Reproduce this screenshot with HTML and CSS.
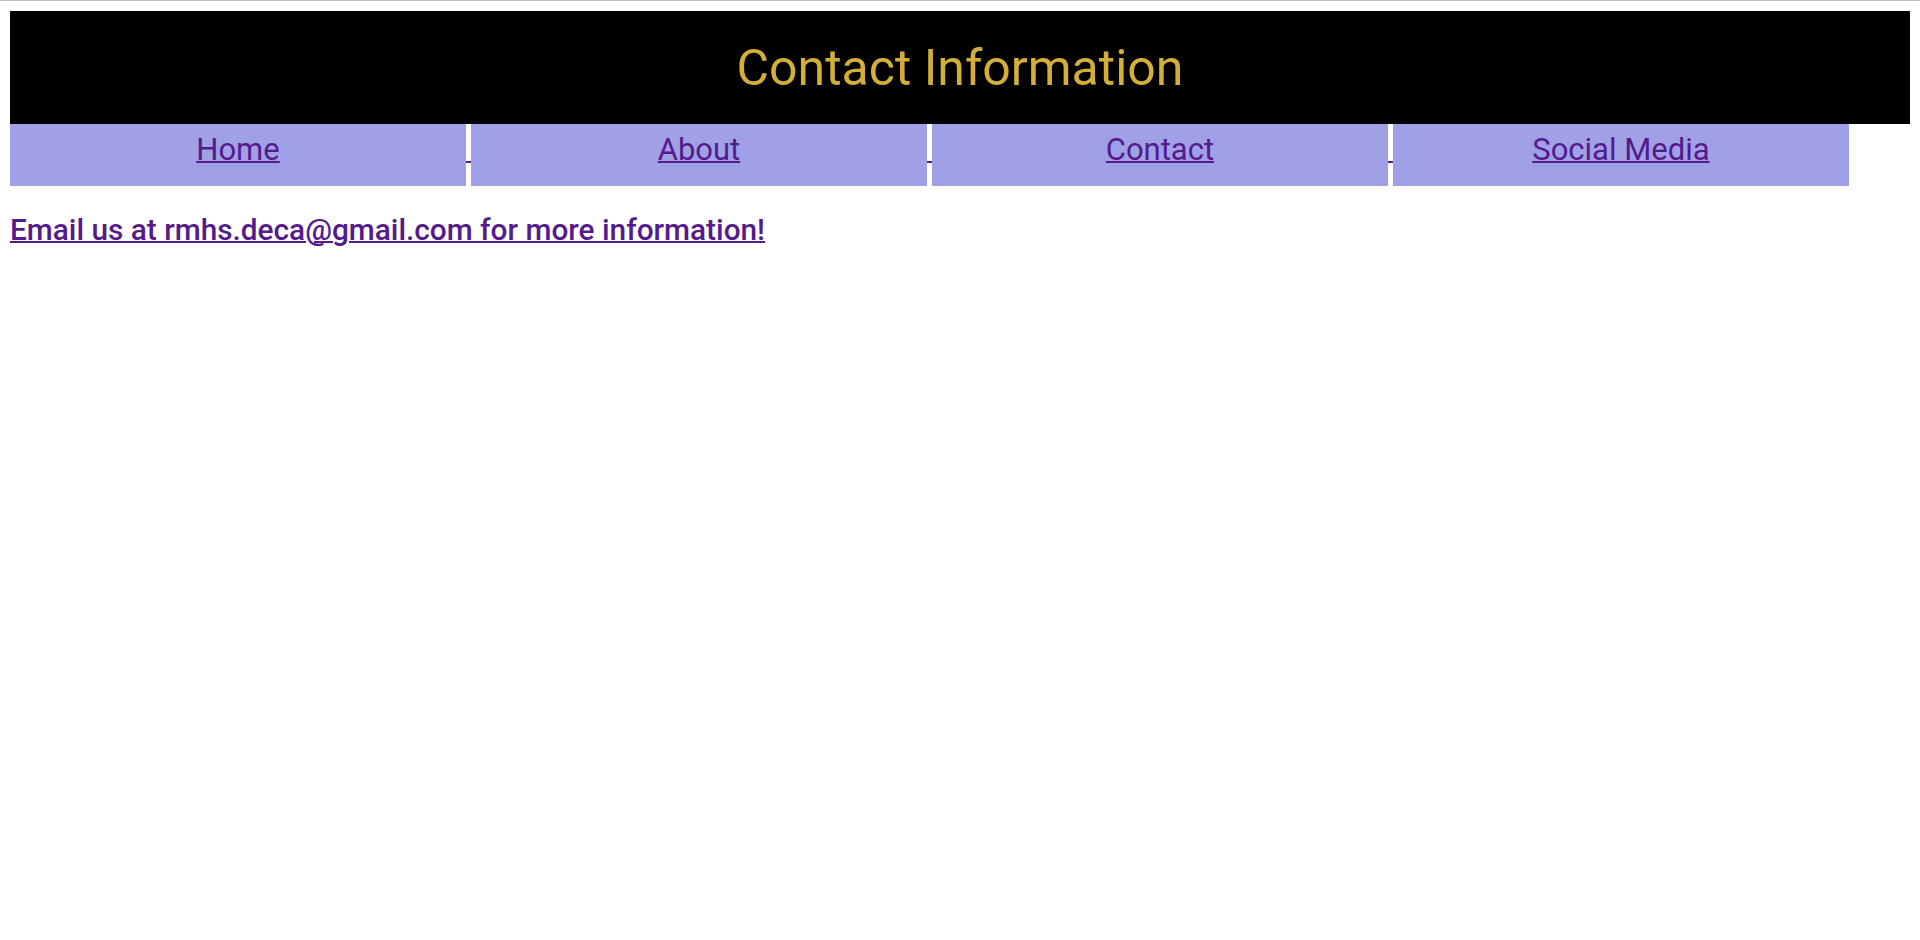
FILE: index.html
```html
<!DOCTYPE html>
<html lang="en">
<head>
<meta charset="utf-8">
<title>Contact Information</title>
<link rel="stylesheet" href="styles.css">
</head>
<body>
<header class="banner">
  <h1 class="banner-title">Contact Information</h1>
</header>
<nav class="menu">
  <a class="menu-link" href="#">Home</a>
  <a class="menu-link" href="#">About</a>
  <a class="menu-link" href="#">Contact</a>
  <a class="menu-link" href="#">Social Media</a>
</nav>
<p class="email"><a class="email-link" href="#">Email us at rmhs.deca@gmail.com for more information!</a></p>
</body>
</html>
```

FILE: styles.css
```css
html {
  border-top: 1px solid #bdbdbd;
}
body {
  margin: 10px;
  font-family: Roboto, "Liberation Sans", sans-serif;
  background: #ffffff;
}
.banner {
  background: #000000;
  height: 113px;
  display: flex;
  align-items: center;
  justify-content: center;
}
.banner-title {
  margin: 0;
  font-size: 50px;
  font-weight: 400;
  color: #d4af37;
}
.menu {
  font-size: 20px;
  color: #551a8b;
  text-decoration: underline;
  text-decoration-thickness: 2px;
}
.menu-link {
  display: inline-block;
  box-sizing: border-box;
  width: 24%;
  height: 62px;
  padding-top: 7px;
  background: #a0a0e6;
  color: #551a8b;
  font-size: 31px;
  text-align: center;
  text-decoration: underline;
  text-decoration-thickness: 2px;
  vertical-align: baseline;
}
.email {
  margin: 26px 0 0;
  font-size: 29.8px;
  font-weight: 500;
}
.email-link {
  color: #551a8b;
  text-decoration-thickness: 2px;
}
```
